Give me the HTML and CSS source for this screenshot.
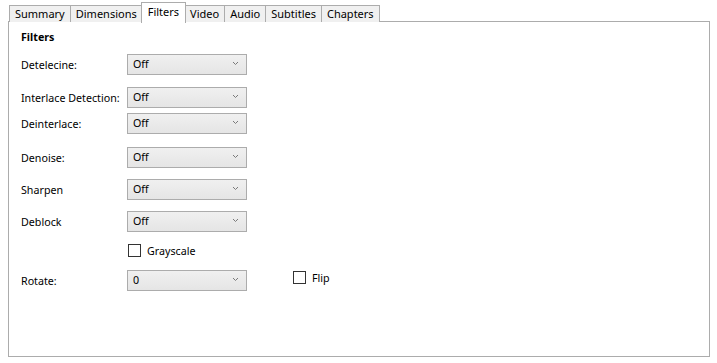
FILE: index.html
```html
<!DOCTYPE html>
<html lang="en">
<head>
    <meta charset="UTF-8">
    <title>Filters</title>
    <link rel="stylesheet" href="styles.css">
</head>
<body>
    <div class="tabs">
        <div class="tab">Summary</div>
        <div class="tab">Dimensions</div>
        <div class="tab active">Filters</div>
        <div class="tab">Video</div>
        <div class="tab">Audio</div>
        <div class="tab">Subtitles</div>
        <div class="tab">Chapters</div>
    </div>
    <div class="panel">
        <div class="heading">Filters</div>

        <div class="row r1">
            <span class="label">Detelecine:</span>
            <div class="combo"><span>Off</span><svg width="7" height="5" viewBox="0 0 7 5"><path d="M1 1 L3.5 3.5 L6 1" fill="none" stroke="#7a7a7a" stroke-width="1"/></svg></div>
        </div>
        <div class="row r2">
            <span class="label">Interlace Detection:</span>
            <div class="combo"><span>Off</span><svg width="7" height="5" viewBox="0 0 7 5"><path d="M1 1 L3.5 3.5 L6 1" fill="none" stroke="#7a7a7a" stroke-width="1"/></svg></div>
        </div>
        <div class="row r3">
            <span class="label">Deinterlace:</span>
            <div class="combo"><span>Off</span><svg width="7" height="5" viewBox="0 0 7 5"><path d="M1 1 L3.5 3.5 L6 1" fill="none" stroke="#7a7a7a" stroke-width="1"/></svg></div>
        </div>
        <div class="row r4">
            <span class="label">Denoise:</span>
            <div class="combo"><span>Off</span><svg width="7" height="5" viewBox="0 0 7 5"><path d="M1 1 L3.5 3.5 L6 1" fill="none" stroke="#7a7a7a" stroke-width="1"/></svg></div>
        </div>
        <div class="row r5">
            <span class="label">Sharpen</span>
            <div class="combo"><span>Off</span><svg width="7" height="5" viewBox="0 0 7 5"><path d="M1 1 L3.5 3.5 L6 1" fill="none" stroke="#7a7a7a" stroke-width="1"/></svg></div>
        </div>
        <div class="row r6">
            <span class="label">Deblock</span>
            <div class="combo"><span>Off</span><svg width="7" height="5" viewBox="0 0 7 5"><path d="M1 1 L3.5 3.5 L6 1" fill="none" stroke="#7a7a7a" stroke-width="1"/></svg></div>
        </div>
        <div class="row r7">
            <span class="label"></span>
            <div class="check"><span class="box"></span><span>Grayscale</span></div>
        </div>
        <div class="row r8">
            <span class="label rotate">Rotate:</span>
            <div class="combo"><span>0</span><svg width="7" height="5" viewBox="0 0 7 5"><path d="M1 1 L3.5 3.5 L6 1" fill="none" stroke="#7a7a7a" stroke-width="1"/></svg></div>
            <div class="check flip"><span class="box"></span><span>Flip</span></div>
        </div>
    </div>
</body>
</html>
```

FILE: styles.css
```css
body { margin: 0; background: #fff; color: #000; font-family: "Noto Sans", "Open Sans", sans-serif; font-size: 10.7px; }

.tabs { display: flex; padding: 2px 0 0 9px; height: 19px; position: relative; z-index: 1; }
.tab { margin-top: 3px; line-height: 15px; padding: 0 5px; border: 1px solid #acacac; border-bottom: none; margin-right: -1px; background: #f0f0f0; box-sizing: border-box; height: 17px; font-size: 11px; }
.tab.active { margin-top: 0; height: 21px; padding: 0 6px; background: #fff; line-height: 17px; margin-left: -1px; margin-right: -2px; position: relative; }

.panel { margin-left: 8px; width: 702px; height: 336px; box-sizing: border-box; border: 1px solid #acacac; padding: 0 0 0 12px; }

.heading { font-weight: bold; height: 16px; line-height: 16px; margin-top: 7px; }

.row { display: flex; align-items: center; }
.label { width: 106px; flex: none; }
.combo { width: 120px; height: 21px; box-sizing: border-box; border: 1px solid #acacac; background: linear-gradient(#f0f0f0, #e5e5e5); display: flex; align-items: center; justify-content: space-between; padding: 0 7px 1px 5px; }
.combo svg { margin-bottom: 1px; }

.r1 { margin-top: 9px; }
.r2 { margin-top: 12px; }
.r3 { margin-top: 5px; }
.r4 { margin-top: 13px; }
.r5 { margin-top: 11px; }
.r6 { margin-top: 11px; }
.r7 { margin-top: 12px; height: 13px; }
.r8 { margin-top: 13px; align-items: flex-start; }
.r8 .rotate { margin-top: 4px; }

.check { display: flex; align-items: center; gap: 6px; height: 13px; margin-left: 1px; }
.box { width: 13px; height: 13px; box-sizing: border-box; border: 1px solid #333; background: #fff; }
.flip { margin-left: 46px; margin-top: 1px; }
```
